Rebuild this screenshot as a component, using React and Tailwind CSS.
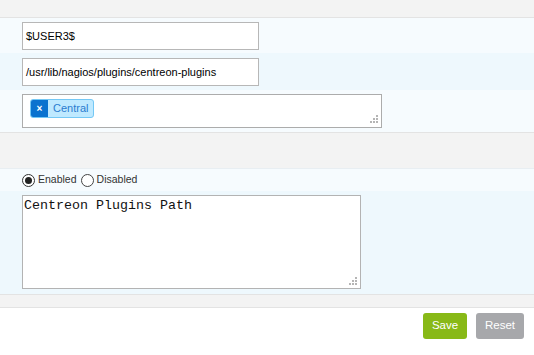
import React from "react";

function Grip({ className }) {
  const dots = [
    [6, 0],
    [3, 3],
    [6, 3],
    [0, 6],
    [3, 6],
    [6, 6],
  ];
  return (
    <svg width="8" height="8" viewBox="0 0 8 8" className={className}>
      {dots.map(([x, y], i) => (
        <rect key={i} x={x} y={y} width="2" height="2" fill="#b5b5b5" />
      ))}
    </svg>
  );
}

export default function App() {
  return (
    <div
      className="w-[534px] h-[355px] bg-white text-black overflow-hidden"
      style={{ fontFamily: '"Liberation Sans", Arial, sans-serif' }}
    >
      <div className="h-[18px] bg-[#f3f3f3] border-b border-[#e3e3e3]" />

      <div className="h-[35px] bg-[#f6fbfe] pl-[22px] pt-[4px]">
        <div className="w-[237px] h-[28px] border border-[#b7b7b7] bg-white flex items-center pl-[3px] text-[11px]">
          $USER3$
        </div>
      </div>

      <div className="h-[37px] bg-[#eef8fd] pl-[22px] pt-[5px]">
        <div className="w-[237px] h-[28px] border border-[#b7b7b7] bg-white flex items-center pl-[3px] text-[11px]">
          /usr/lib/nagios/plugins/centreon-plugins
        </div>
      </div>

      <div className="h-[42px] bg-[#f6fbfe] pl-[22px] pt-[4px]">
        <div className="relative w-[360px] h-[34px] border border-[#acacac] bg-white pl-[7px] pt-[4px] flex items-start">
          <div className="flex h-[19px] rounded-[3px] border border-[#74c8f5] bg-[#bfe9ff] overflow-hidden">
            <div className="w-[17px] bg-[#0a72cf] flex items-center justify-center text-white text-[10px] font-bold leading-none">
              ×
            </div>
            <div className="px-[5px] flex items-center text-[11px] text-[#2b7ccf]">
              Central
            </div>
          </div>
          <Grip className="absolute right-[3px] bottom-[4px]" />
        </div>
      </div>

      <div className="h-[36px] bg-[#f3f3f3] border-t border-[#e3e3e3]" />

      <div className="h-[23px] bg-[#f6fbfe] border-t border-[#e8eef2] pl-[22px] flex items-center gap-[3px] text-[10.5px] text-[#333]">
        <span className="w-[13px] h-[13px] rounded-full border border-[#333] bg-white flex items-center justify-center">
          <span className="w-[7px] h-[7px] rounded-full bg-[#222]" />
        </span>
        <span>Enabled</span>
        <span className="ml-[1px] w-[13px] h-[13px] rounded-full border border-[#444] bg-white" />
        <span>Disabled</span>
      </div>

      <div className="h-[103px] bg-[#eef8fd] pl-[22px] pt-[4px]">
        <div
          className="relative w-[339px] h-[94px] border border-[#b3b3b3] bg-white pl-[1px] pt-[2px] text-[13.33px] leading-[16px] text-[#111]"
          style={{ fontFamily: '"Liberation Mono", "Courier New", monospace' }}
        >
          Centreon Plugins Path
          <Grip className="absolute right-[3px] bottom-[3px]" />
        </div>
      </div>

      <div className="h-[14px] bg-[#f3f3f3] border-t border-b border-[#e3e3e3]" />

      <div className="flex justify-end gap-[9px] pr-[10px] pt-[5px]">
        <button className="w-[44px] h-[26px] rounded-[3px] bg-[#88b917] text-white text-[11.5px]">
          Save
        </button>
        <button className="w-[48px] h-[26px] rounded-[3px] bg-[#a7a8ab] text-white text-[11.5px]">
          Reset
        </button>
      </div>
    </div>
  );
}
